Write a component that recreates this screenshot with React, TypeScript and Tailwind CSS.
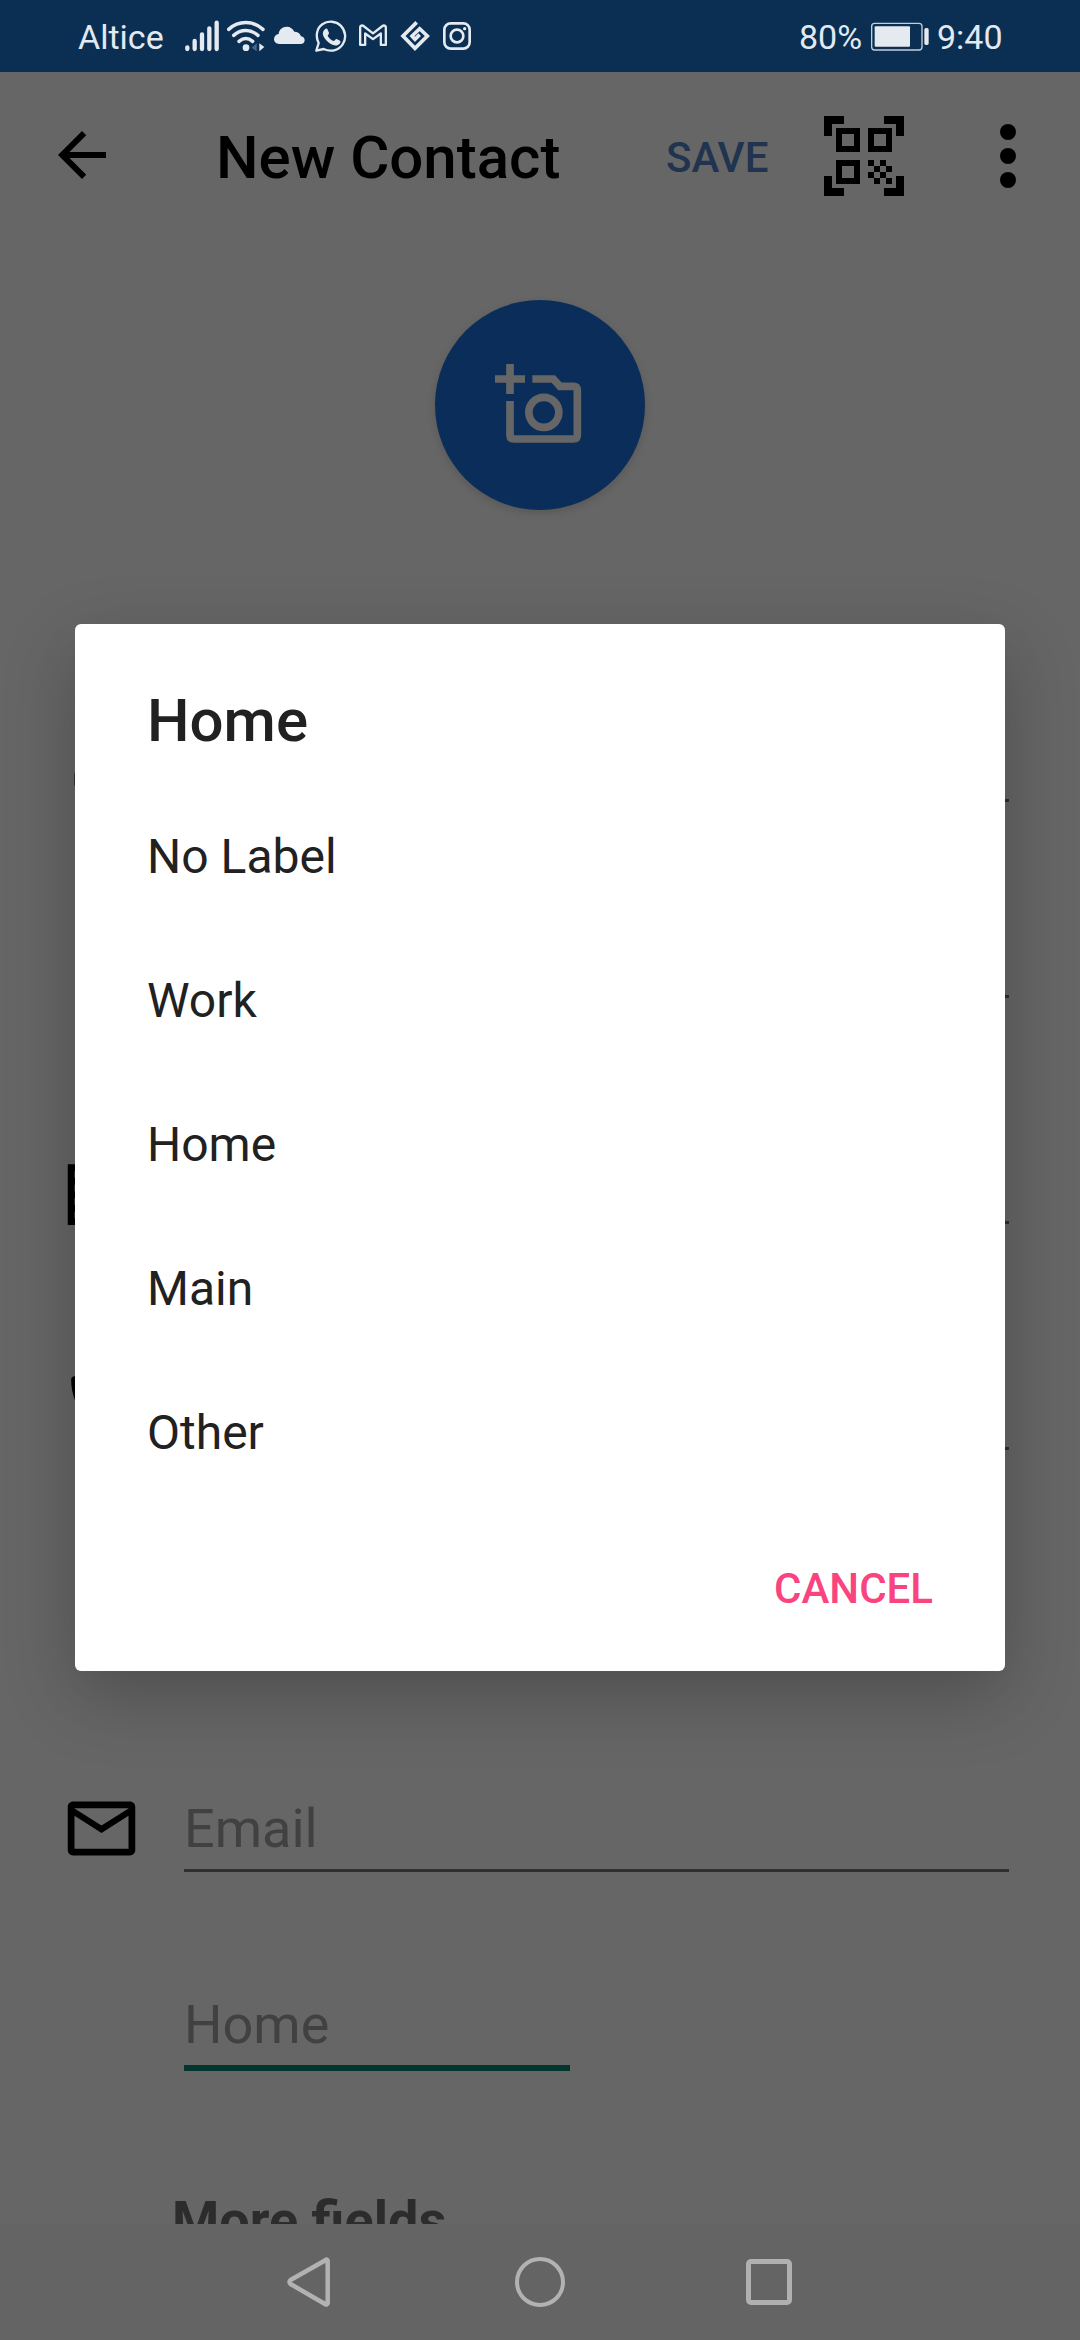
import React from "react";

const LABELS = ["No Label", "Work", "Home", "Main", "Other"];

function StatusBar() {
  return (
    <header className="flex h-[72px] items-center bg-[#0a2f53] text-[34px] leading-[72px] text-[#e3e9f1]">
      <span className="ml-[78px] w-[107px] whitespace-nowrap pt-[2px]">Altice</span>
      <svg className="h-[72px] w-[34px]" viewBox="375 0 102 216" stroke="#e5e9f0" strokeWidth="13" strokeLinecap="round">
        <path d="M382 142v5M404 123v24M426 103v44M448 85v62M470 68v79" />
      </svg>
      <svg className="ml-[8px] h-[72px] w-[38px]" viewBox="500 0 114 216" fill="none" stroke="#e5e9f0" strokeWidth="10.500" strokeLinecap="round">
        <path d="M505 88C535 61 578 61 608 88M520 106C542 87 571 87 593 106M536 124C549 113 564 113 577 124" />
        <circle cx="557" cy="143" r="10" fill="#e5e9f0" stroke="none" />
        <path d="M589 130v24l-15-11z" fill="#4a6785" stroke="none" />
        <path d="M597 130l15 11-15 13z" fill="#e5e9f0" stroke="none" />
      </svg>
      <svg className="ml-[9px] h-[72px] w-[31px]" viewBox="641 0 93 216" fill="#e5e9f0">
        <path d="M657 132c-9 0-16-6-16-14 0-9 6-15 14-16 1-13 11-22 24-22 11 0 19 6 23 15 11-1 18 6 20 14 7 1 11 6 11 12 0 7-5 11-12 11z" />
      </svg>
      <svg className="ml-[10px] h-[72px] w-[32px]" viewBox="765 0 96 216">
        <path d="M769 152l7-23C765 108 771 84 787 73c17-12 41-10 55 4 15 15 18 39 6 56-13 19-36 24-57 14z" fill="none" stroke="#e5e9f0" strokeWidth="7" strokeLinejoin="round" />
        <path d="M797 86c3-1 5 0 6 3l4 9c1 3-4 7-4 9 4 8 10 13 18 16 3 0 6-7 9-6l10 5c3 2 1 7-1 9-8 9-21 5-31-2-9-7-16-15-19-24-2-8 2-16 8-19z" fill="#e5e9f0" />
      </svg>
      <svg className="ml-[12px] h-[72px] w-[28px]" viewBox="897 0 84 216" fill="none" stroke="#e5e9f0" strokeWidth="7" strokeLinejoin="round">
        <path d="M900.500 134.500V82c0-5 6-7 10-4l28.500 22 28.500-22c4-3 10-1 10 4v52.500h-15v-34l-23.500 17-23.500-17v34z" />
      </svg>
      <svg className="ml-[13px] h-[72px] w-[30px]" viewBox="1020 0 90 216" fill="none" stroke="#e5e9f0" strokeWidth="11">
        <path d="M1070 67l-41 41 36 37 37-37-23-22-23 22 9 10 14-14" />
      </svg>
      <svg className="ml-[13px] h-[72px] w-[28px]" viewBox="1149 0 84 216" fill="none" stroke="#e5e9f0" strokeWidth="8">
        <rect x="1153" y="70" width="76" height="76" rx="19" />
        <circle cx="1191" cy="108" r="19" />
        <circle cx="1214" cy="86" r="5" fill="#e5e9f0" stroke="none" />
      </svg>
      <span className="ml-auto w-[72px] whitespace-nowrap pt-[2px]">80%</span>
      <svg className="h-[72px] w-[58px]" viewBox="303 0 174 216">
        <rect x="305" y="70" width="151" height="80" rx="9" fill="none" stroke="#c3cedb" strokeWidth="4" />
        <rect x="314" y="79" width="106" height="61" rx="3" fill="#e5e9f0" />
        <rect x="463" y="84" width="13" height="51" rx="5" fill="#e5e9f0" />
      </svg>
      <span className="mr-[76px] w-[75px] whitespace-nowrap pl-[8px] pt-[2px]">9:40</span>
    </header>
  );
}

function AppBar() {
  return (
    <div className="flex h-[168px] items-center">
      <svg className="ml-[46px] -mt-[2px] size-[72px]" viewBox="0 0 24 24">
        <path d="M20 11H7.830l5.590-5.590L12 4l-8 8 8 8 1.410-1.410L7.830 13H20v-2z" />
      </svg>
      <h1 className="ml-[98px] w-[450px] whitespace-nowrap pt-[4px] text-[60px] font-medium leading-none text-black">New Contact</h1>
      <span className="w-[158px] whitespace-nowrap pt-[3px] text-[42px] font-medium leading-none text-[#20334f]">SAVE</span>
      <svg className="size-20" viewBox="0 0 80 80" shapeRendering="crispEdges">
        <path d="M0 0h20v8H8v12H0zM60 0h20v20h-8V8H60zM0 60h8v12h12v8H0zM72 60h8v20H60v-8h12z" />
        <path d="M15 15h18v18H15zM47 15h18v18H47zM15 47h18v18H15z" fill="none" stroke="black" strokeWidth="6" />
        <path d="M44 44h6v6h-6zM56 44h6v6h-6zM50 50h6v6h-6zM62 50h6v6h-6zM44 56h6v6h-6zM56 56h6v6h-6zM50 62h6v6h-6zM62 62h6v6h-6z" />
      </svg>
      <div className="ml-[96px] flex flex-col gap-2">
        <i className="size-4 rounded-full bg-black" />
        <i className="size-4 rounded-full bg-black" />
        <i className="size-4 rounded-full bg-black" />
      </div>
    </div>
  );
}

function PhotoButton() {
  return (
    <button className="mx-auto mt-[60px] block size-[210px] rounded-full bg-[#0b2d59] shadow-[0_3px_9px_rgba(0,0,0,0.15)]">
      <svg className="size-[210px]" viewBox="105 90 630 630" fill="none" stroke="#666666" strokeWidth="23">
        <path d="M285 327h90M330 282v90M330 393v102q0 12 12 12h178q12 0 12-12V361q0-12-12-12h-40l-20-22h-63" />
        <circle cx="431.500" cy="427" r="45" />
      </svg>
    </button>
  );
}

type FieldProps = {
  hint?: string;
  height: string;
  icon?: string;
  iconOffset?: string;
  short?: boolean;
  active?: boolean;
};

function Field({ hint, height, icon, iconOffset = "mb-[3px]", short, active }: FieldProps) {
  return (
    <div className={`flex items-end ${height}`}>
      <div className="ml-[60.500px] w-[123.500px]">
        {icon && (
          <svg className={`size-[81px] ${iconOffset}`} viewBox="0 0 24 24">
            <path d={icon} fillRule="evenodd" />
          </svg>
        )}
      </div>
      <div
        className={`flex h-[84px] items-start border-b-[3px] text-[54px] leading-[64px] text-[#414141] ${
          short ? "w-[386px]" : "w-[825px]"
        } ${active ? "border-[#03352f] shadow-[0_3px_0_#03352f]" : "border-[#2f2f2f]"}`}
      >
        {hint && <span className="pt-[9px]">{hint}</span>}
      </div>
    </div>
  );
}

const PERSON =
  "M12 5.900c1.160 0 2.100.94 2.100 2.100s-.94 2.100-2.100 2.100S9.900 9.160 9.900 8s.94-2.100 2.100-2.100m0 9c2.970 0 6.100 1.460 6.100 2.100v1.100H5.900V17c0-.64 3.130-2.100 6.100-2.100M12 4C9.790 4 8 5.790 8 8s1.790 4 4 4 4-1.790 4-4-1.790-4-4-4zm0 9c-2.670 0-8 1.340-8 4v3h16v-3c0-2.660-5.330-4-8-4z";
const BUSINESS =
  "M12 7V3H2v18h20V7H12zM6 19H4v-2h2v2zm0-4H4v-2h2v2zm0-4H4V9h2v2zm0-4H4V5h2v2zm4 12H8v-2h2v2zm0-4H8v-2h2v2zm0-4H8V9h2v2zm0-4H8V5h2v2zm10 12h-8v-2h2v-2h-2v-2h2v-2h-2V9h8v10z";
const PHONE =
  "M6.620 10.790c1.440 2.830 3.760 5.140 6.590 6.590l2.200-2.200c.27-.27.67-.36 1.020-.24 1.120.37 2.330.57 3.570.57.55 0 1 .45 1 1V20c0 .55-.45 1-1 1-9.390 0-17-7.610-17-17 0-.55.45-1 1-1h3.500c.55 0 1 .45 1 1 0 1.250.2 2.450.57 3.570.11.35.03.74-.25 1.020l-2.200 2.200z";
const MAIL =
  "M20.400 4H3.600C2.700 4 2 4.700 2 5.600v12.800c0 .9.700 1.600 1.600 1.600h16.800c.9 0 1.600-.7 1.600-1.600V5.600c0-.9-.7-1.600-1.600-1.600zM20 6.100l-8 5-8-5V6h16zM20 18H4V8.200l8 5.100 8-5.100z";

function ContactForm() {
  return (
    <div className="mt-[66px]">
      <Field height="h-[226px]" icon={PERSON} />
      <Field height="h-[196px]" />
      <Field height="h-[226px]" icon={BUSINESS} iconOffset="-mb-[11px]" />
      <Field height="h-[226px]" icon={PHONE} />
      <Field height="h-[196px]" short />
      <Field hint="Email" height="h-[226px]" icon={MAIL} />
      <Field hint="Home" height="h-[196px]" short active />
      <p className="ml-[172px] mt-[121px] whitespace-nowrap text-[54px] font-bold leading-[64px] text-[#2c2c2c]">More fields</p>
    </div>
  );
}

function NavBar() {
  return (
    <nav className="flex h-[116px] items-center bg-[#646464]">
      <svg className="ml-[287px] h-[50px] w-[43px]" viewBox="0 0 43 50" fill="none" stroke="#b2b2b2" strokeWidth="4.500" strokeLinejoin="round">
        <path d="M38 3.500Q40.500 1.500 40.700 4V46Q40.500 48.500 38 47L3.500 27Q1.500 25 3.500 23z" />
      </svg>
      <i className="ml-[185px] size-[50px] rounded-full border-[4.500px] border-[#b2b2b2]" />
      <i className="ml-[181px] size-[46px] rounded-[5px] border-[5px] border-[#b0b0b0]" />
    </nav>
  );
}

function LabelDialog() {
  return (
    <section className="absolute left-[75px] top-[624px] flex h-[1047px] w-[930px] flex-col rounded-[6px] bg-white px-[72px] text-[#212121] shadow-[0_24px_72px_rgba(0,0,0,0.24)]">
      <h2 className="flex h-[161px] items-end pb-[29px] text-[60px] font-medium leading-[70px]">Home</h2>
      <ul>
        {LABELS.map((label) => (
          <li key={label} className="flex h-36 items-center text-[48px] leading-[56px]">
            {label}
          </li>
        ))}
      </ul>
      <button className="mt-[59px] self-end text-[42px] font-medium leading-[50px] text-[#f9447f]">CANCEL</button>
    </section>
  );
}

export default function App() {
  return (
    <main className="relative flex h-[2340px] w-[1080px] flex-col overflow-hidden bg-[#666666] font-['Roboto',sans-serif]">
      <StatusBar />
      <div className="h-[2152px] overflow-hidden">
        <AppBar />
        <PhotoButton />
        <ContactForm />
      </div>
      <NavBar />
      <LabelDialog />
    </main>
  );
}
